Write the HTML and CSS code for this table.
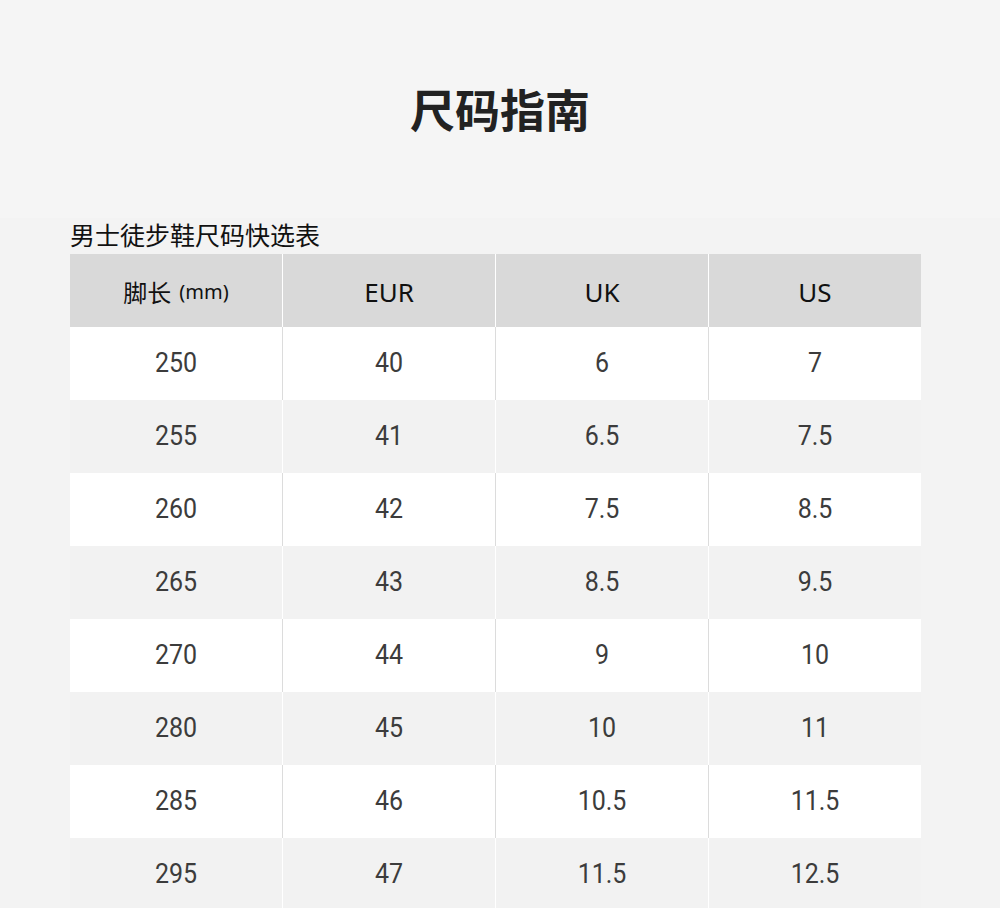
FILE: index.html
```html
<!DOCTYPE html>
<html lang="zh-CN">
<head>
<meta charset="utf-8">
<title>尺码指南</title>
<link rel="stylesheet" href="styles.css">
</head>
<body>
<div class="page">
  <header class="hero">
    <h1 class="title">尺码指南</h1>
  </header>
  <section class="chart">
    <h2 class="caption">男士徒步鞋尺码快选表</h2>
    <div class="table">
      <div class="row head">
        <div class="cell"><span class="cjk">脚长</span> <span class="unit">(mm)</span></div>
        <div class="cell">EUR</div>
        <div class="cell">UK</div>
        <div class="cell">US</div>
      </div>
      <div class="row odd"><div class="cell"><span class="num">250</span></div><div class="cell"><span class="num">40</span></div><div class="cell"><span class="num">6</span></div><div class="cell"><span class="num">7</span></div></div>
      <div class="row even"><div class="cell"><span class="num">255</span></div><div class="cell"><span class="num">41</span></div><div class="cell"><span class="num">6.5</span></div><div class="cell"><span class="num">7.5</span></div></div>
      <div class="row odd"><div class="cell"><span class="num">260</span></div><div class="cell"><span class="num">42</span></div><div class="cell"><span class="num">7.5</span></div><div class="cell"><span class="num">8.5</span></div></div>
      <div class="row even"><div class="cell"><span class="num">265</span></div><div class="cell"><span class="num">43</span></div><div class="cell"><span class="num">8.5</span></div><div class="cell"><span class="num">9.5</span></div></div>
      <div class="row odd"><div class="cell"><span class="num">270</span></div><div class="cell"><span class="num">44</span></div><div class="cell"><span class="num">9</span></div><div class="cell"><span class="num">10</span></div></div>
      <div class="row even"><div class="cell"><span class="num">280</span></div><div class="cell"><span class="num">45</span></div><div class="cell"><span class="num">10</span></div><div class="cell"><span class="num">11</span></div></div>
      <div class="row odd"><div class="cell"><span class="num">285</span></div><div class="cell"><span class="num">46</span></div><div class="cell"><span class="num">10.5</span></div><div class="cell"><span class="num">11.5</span></div></div>
      <div class="row even"><div class="cell"><span class="num">295</span></div><div class="cell"><span class="num">47</span></div><div class="cell"><span class="num">11.5</span></div><div class="cell"><span class="num">12.5</span></div></div>
    </div>
  </section>
</div>
</body>
</html>
```
FILE: styles.css
```css
html, body {
  margin: 0;
  padding: 0;
  background: #f4f4f4;
}
body {
  font-family: "Noto Sans", "Noto Sans CJK SC", sans-serif;
  color: #333;
}
.page {
  width: 1000px;
  height: 908px;
  overflow: hidden;
}
.hero {
  background: #f5f5f5;
  height: 218px;
  display: flex;
  justify-content: center;
  align-items: flex-start;
}
.title {
  margin: 81px 0 0;
  font-size: 45px;
  line-height: 56px;
  font-weight: 700;
  color: #222;
  font-family: "Noto Sans CJK SC", sans-serif;
}
.chart {
  background: #f3f3f3;
  padding: 0 79px 0 70px;
}
.caption {
  margin: 0;
  padding-bottom: 4px;
  font-family: "Noto Sans CJK SC", sans-serif;
  font-weight: 400;
  font-size: 25px;
  line-height: 32px;
  color: #111;
}
.table {
  display: flex;
  flex-direction: column;
}
.row {
  display: grid;
  grid-template-columns: repeat(4, 1fr);
  column-gap: 1px;
  height: 73px;
}
.row.head { background: #ffffff; }
.row.odd { background: #dcdcdc; }
.row.even { background: #ffffff; }
.cell {
  display: flex;
  align-items: center;
  justify-content: center;
  font-family: Roboto, "Noto Sans", sans-serif;
  font-size: 25px;
  color: #3c3c3c;
  padding-bottom: 2px;
}
.num {
  display: inline-block;
  transform: scaleY(1.1);
}
.head .cell {
  background: #d9d9d9;
  color: #111;
  font-size: 26px;
  padding-bottom: 0;
  padding-top: 2px;
  font-family: "Noto Sans", "Noto Sans CJK SC", sans-serif;
}
.odd .cell { background: #ffffff; }
.even .cell { background: #f2f2f2; }
.cjk {
  font-family: "Noto Sans CJK SC", sans-serif;
  font-size: 24px;
}
.unit {
  font-size: 20px;
  margin-left: 8px;
}
```
